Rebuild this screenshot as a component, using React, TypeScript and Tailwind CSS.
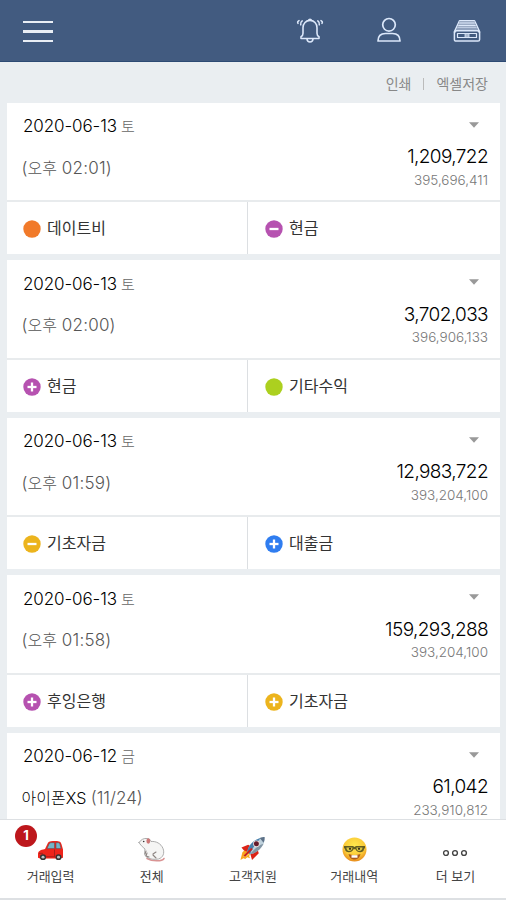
import React from "react";

type Mark = "none" | "plus" | "minus";
type Account = { name: string; color: string; mark: Mark };
type Entry = {
  date: string;
  day: string;
  memo?: string;
  memoNote: React.ReactNode;
  amount: string;
  balance: string;
  left?: Account;
  right?: Account;
};

const PURPLE = "#b652b0";
const YELLOW = "#ecb41d";

function Time({ value }: { value: string }) {
  return (
    <>
      <span>(</span>
      <span className="text-[16px] tracking-normal">오후</span>
      <span className="tracking-[0.2px]"> {value})</span>
    </>
  );
}

const entries: Entry[] = [
  {
    date: "2020-06-13", day: "토", memoNote: <Time value="02:01" />, amount: "1,209,722", balance: "395,696,411",
    left: { name: "데이트비", color: "#f17a2a", mark: "none" },
    right: { name: "현금", color: PURPLE, mark: "minus" },
  },
  {
    date: "2020-06-13", day: "토", memoNote: <Time value="02:00" />, amount: "3,702,033", balance: "396,906,133",
    left: { name: "현금", color: PURPLE, mark: "plus" },
    right: { name: "기타수익", color: "#acd01f", mark: "none" },
  },
  {
    date: "2020-06-13", day: "토", memoNote: <Time value="01:59" />, amount: "12,983,722", balance: "393,204,100",
    left: { name: "기초자금", color: YELLOW, mark: "minus" },
    right: { name: "대출금", color: "#2f7df0", mark: "plus" },
  },
  {
    date: "2020-06-13", day: "토", memoNote: <Time value="01:58" />, amount: "159,293,288", balance: "393,204,100",
    left: { name: "후잉은행", color: PURPLE, mark: "plus" },
    right: { name: "기초자금", color: YELLOW, mark: "plus" },
  },
  { date: "2020-06-12", day: "금", memo: "아이폰XS", memoNote: "(11/24)", amount: "61,042", balance: "233,910,812" },
];

function AccountCell({ account }: { account: Account }) {
  return (
    <div className="flex h-full flex-1 items-center gap-[6px]">
      <svg className="mt-[2px] h-[18px] w-[18px] shrink-0" viewBox="0 0 18 18">
        <circle cx="9" cy="9" r="8.7" fill={account.color} />
        {account.mark !== "none" && <path d="M4.5 9h9" stroke="#fff" strokeWidth="2.3" />}
        {account.mark === "plus" && <path d="M9 4.5v9" stroke="#fff" strokeWidth="2.3" />}
      </svg>
      <span className="text-[16px] leading-6 text-[#333]">{account.name}</span>
    </div>
  );
}

function Card({ entry }: { entry: Entry }) {
  return (
    <article className="h-[151.5px] shrink-0 bg-white">
      <div className="flex h-[99.5px] justify-between border-b-2 border-[#e8ebed] pl-4 pr-3">
        <div>
          <div className="mt-[11.5px] h-6 whitespace-pre text-[17px] font-light leading-6 tracking-[-0.1px] text-black">
            {entry.date}
            <span className="text-[15px] text-[#666]"> {entry.day}</span>
          </div>
          <div className="-ml-[1.5px] mt-[17.5px] h-6 whitespace-pre text-[17px] font-light leading-6 text-[#555]">
            {entry.memo && <span className="text-[16px] text-black">{entry.memo} </span>}
            {entry.memoNote}
          </div>
        </div>
        <div className="flex flex-col items-end">
          <svg className="mr-[9px] mt-[19px] h-[6px] w-[10px]" viewBox="0 0 10 6">
            <path d="M0 .3h10L5 5.7z" fill="#999" />
          </svg>
          <div className="mt-[17.5px] h-6 text-[19px] font-light leading-6 tracking-[-0.6px] text-black">{entry.amount}</div>
          <div className="mt-[0.5px] h-5 text-[13.5px] font-light leading-5 text-[#777]">{entry.balance}</div>
        </div>
      </div>
      {entry.left && entry.right && (
        <div className="flex h-[52px]">
          <div className="w-[241px] border-r border-[#dcdfe2] pl-[16px]">
            <AccountCell account={entry.left} />
          </div>
          <div className="flex-1 pl-[17px]">
            <AccountCell account={entry.right} />
          </div>
        </div>
      )}
    </article>
  );
}

function BellIcon() {
  return (
    <svg className="h-[28px] w-[28px]" viewBox="0 0 28 28" fill="none" stroke="#dce8fa" strokeWidth="1.6" strokeLinecap="round" strokeLinejoin="round">
      <path d="M12.500 3.400a1.600 1.600 0 0 1 3 0M5 21.500h18v-1.700c-1.500-.8-2-1.800-2-3.500v-5.600c0-4.300-3-7.300-7-7.300s-7 3-7 7.300v5.600c0 1.700-.5 2.700-2 3.500z" />
      <path d="M11 22c.2 2 1.300 3 3 3s2.800-1 3-3" />
      <path d="M4.700 7.700c-.4-1.500.3-2.900 1.500-3.800M2 6.400c-.7-1.100-.3-2.100 1-2.800M23.300 7.700c.4-1.500-.3-2.900-1.500-3.800M26 6.400c.7-1.100.3-2.100-1-2.800" />
    </svg>
  );
}

function PersonIcon() {
  return (
    <svg className="h-[26px] w-[24px]" viewBox="0 0 24 26" fill="none" stroke="#dce8fa" strokeWidth="1.700">
      <circle cx="12" cy="7.800" r="6.300" />
      <path d="M1 24c0-5.200 3.300-7.500 7.500-7.500h7c4.200 0 7.500 2.300 7.500 7.500z" strokeLinejoin="round" />
    </svg>
  );
}

function DriveIcon() {
  return (
    <svg className="h-[24px] w-[28px]" viewBox="0 0 28 24" fill="none" stroke="#dce8fa" strokeWidth="1.500" strokeLinejoin="round">
      <path d="M6.500 1.800h15l1.500 3 3.600 8v7.700c0 1-.6 1.600-1.600 1.600H3c-1 0-1.600-.6-1.600-1.600v-7.700L5 5z" />
      <path d="M6.500 2h15l2 7h-19z" fill="#9babc4" stroke="none" />
      <path d="M6.300 4h15.400M5.300 6.500h17.400M4 9h20" strokeWidth="1.100" />
      <path d="M1.500 13.500c.4-1.400 1.200-2 2.500-2h20c1.300 0 2.100.6 2.500 2" strokeWidth="2" />
      <path d="M4.500 14.500h19v4h-19z" strokeWidth="1.200" />
      <path d="M12 14.500h4v4h-4z" fill="#aab9d0" strokeWidth=".8" />
    </svg>
  );
}

function CarIcon() {
  return (
    <svg className="h-[21px] w-[27px]" viewBox="0 0 27 22" preserveAspectRatio="none">
      <path d="M1 15c0-3 2-4.500 7-5.500L11 3c.5-1 1.500-1.500 3-1.700 3-.4 6-.3 8 .2 1.300.3 2 1 2.500 3L26 10v8.500l-3 1H3l-2-1z" fill="#ee241b" />
      <path d="M10 9l2.200-5c.4-.8 1-1.200 2-1.200h3.300V9zM19 2.800h2c1 0 1.600.4 1.900 1.500L24 9h-5z" fill="#73b6c8" stroke="#684b50" strokeWidth=".6" />
      <path d="M2 14h4M17.500 10v8M8 17.500h10" stroke="#a9201c" />
      <circle cx="6" cy="18" r="3" fill="#333" /><circle cx="6" cy="18" r="1.500" fill="#b7c2c5" />
      <circle cx="21.500" cy="18" r="3" fill="#333" /><circle cx="21.500" cy="18" r="1.500" fill="#b7c2c5" />
    </svg>
  );
}

function MouseIcon() {
  return (
    <svg className="h-[25px] w-[27px]" viewBox="0 0 27 25" fill="none" strokeLinecap="round" strokeLinejoin="round">
      <path d="M9 21.500c5 3 15 3.300 17 0" stroke="#d99494" strokeWidth="1.500" />
      <path d="M1 5.500C3 2.500 6 1 9 1.500c2 0 3.500 1 4 3 5-.5 10 2 12 7 1.800 4.500.2 9-4.500 10.500-4 .8-9 .3-12-2-2.500-2-2-5-1.500-8C4.500 10 2 7.500 1 5.500z" fill="#f5f5f4" stroke="#a4a4a4" strokeWidth=".9" />
      <ellipse cx="10.300" cy="4" rx="1.900" ry="2.700" fill="#cd7777" />
      <circle cx="5.700" cy="4.500" r=".8" fill="#333" />
      <path d="M8 14l-1 3M9 16l-1 3 3 1M15 17l3-2M15 18l3 3" stroke="#8c8481" strokeWidth="1.100" />
    </svg>
  );
}

function RocketIcon() {
  return (
    <svg className="h-[26px] w-[28px]" viewBox="0 0 28 27">
      <path d="M2 12l7-3 5 3-7 6zM13 25l7-7-2-6-7 6z" fill="#dc2418" />
      <path d="M1 25l2-8 2-2 2 1 3-1 1 3-1 3 1 2-3-1-2 2-2-1z" fill="#f9a51d" />
      <path d="M4 21l4-4 2 2-4 3z" fill="#fff06b" />
      <path d="M8 16C10 8 17 2 26 1c1 8-6 16-15 18z" fill="#bfd1dc" />
      <path d="M8 16C10 8 17 3 22 2 18 7 13 12 11 19z" fill="#477fac" />
      <path d="M11 19C17 18 22 14 25 8l-3 1c-5 3-8 6-11 10z" fill="#8295a4" />
      <path d="M21 2c2-.8 4-1 5-1 .2 2-.2 4-1 6z" fill="#5d7187" />
      <circle cx="17.500" cy="8" r="3.400" fill="#f0dfdc" /><circle cx="17.500" cy="8" r="2.600" fill="#641a2b" />
      <path d="M5 21l8-8" stroke="#c92320" strokeWidth="2" />
    </svg>
  );
}

function NerdIcon() {
  return (
    <svg className="h-[25px] w-[25px]" viewBox="0 0 25 25">
      <defs>
        <radialGradient id="nerdFace" cx="50%" cy="35%" r="65%">
          <stop offset="0" stopColor="#ffe94e" /><stop offset=".65" stopColor="#fbcb38" /><stop offset="1" stopColor="#e88b1c" />
        </radialGradient>
      </defs>
      <circle cx="12.500" cy="12.500" r="12" fill="url(#nerdFace)" />
      <path d="M2 9h9l1.500 1L14 9h9v2l-1 1c0 4-7 4.500-8.500.2h-2C10 16.500 3 16 3 12l-1-1z" fill="#645d20" />
      <path d="M4.500 10.500h6c0 4-5 5-6 1zM14.500 10.500h6c0 4-5 5-6 1z" fill="#d8c642" />
      <circle cx="8" cy="11.800" r="1.100" fill="#302b1d" /><circle cx="17" cy="11.800" r="1.100" fill="#302b1d" />
      <path d="M6.500 17c3.500 1.500 8.500 1.500 12 0-1 4.500-4 5.500-6 5.500s-5-1-6-5.500z" fill="#ad5b18" />
      <path d="M9.500 18.200h6v2.500h-6z" fill="#fff" />
    </svg>
  );
}

function MoreIcon() {
  return (
    <svg className="h-[8px] w-[26px]" viewBox="0 0 26 8" fill="none" stroke="#444" strokeWidth="1.400">
      <circle cx="4" cy="4" r="2.400" /><circle cx="13" cy="4" r="2.400" /><circle cx="22" cy="4" r="2.400" />
    </svg>
  );
}

const tabs = [
  { label: "거래입력", icon: <CarIcon />, badge: "1" },
  { label: "전체", icon: <MouseIcon /> },
  { label: "고객지원", icon: <RocketIcon /> },
  { label: "거래내역", icon: <NerdIcon /> },
  { label: "더 보기", icon: <MoreIcon /> },
];

export default function App() {
  return (
    <div className="flex h-[900px] w-[506px] flex-col overflow-hidden bg-[#eaeef1] font-['Inter','Noto_Sans_CJK_KR',sans-serif]">
      <header className="flex h-[62px] shrink-0 items-center border-b border-[#2d4a73] bg-[#425b80] pl-[23px] pr-[25px]">
        <div className="mt-[2px] flex w-[30px] flex-col gap-[7px]">
          <span className="h-[2.500px] bg-[#e9eef5]" />
          <span className="h-[2.500px] bg-[#e9eef5]" />
          <span className="h-[2.500px] bg-[#e9eef5]" />
        </div>
        <div className="ml-auto flex items-center">
          <BellIcon />
          <span className="ml-[53px] mt-[-2px]"><PersonIcon /></span>
          <span className="ml-[52px]"><DriveIcon /></span>
        </div>
      </header>
      <div className="flex h-[40.500px] shrink-0 items-center justify-end pr-[18px] pt-[3px] text-[14px] text-[#888]">
        <span>인쇄</span>
        <span className="mx-[12px] h-3 w-px bg-[#bbb]" />
        <span>엑셀저장</span>
      </div>
      <main className="flex min-h-0 flex-1 flex-col gap-[6px] overflow-hidden pl-[7px] pr-[6px]">
        {entries.map((entry, i) => <Card key={i} entry={entry} />)}
      </main>
      <nav className="flex h-[81px] shrink-0 border-b-2 border-t border-[#dde0e3] bg-white">
        {tabs.map((tab) => (
          <div key={tab.label} className="relative flex flex-1 flex-col items-center">
            <div className="mt-[12px] flex h-[34px] items-center justify-center">
              <span className={tab.label === "더 보기" ? "flex pt-[8px]" : tab.badge ? "flex pt-[2px]" : "flex"}>{tab.icon}</span>
            </div>
            <span className="text-[13px] leading-5 text-[#444]">{tab.label}</span>
            {tab.badge && (
              <span className="absolute left-[15px] top-[5px] flex h-[22px] w-[22px] items-center justify-center rounded-full bg-[#bd171c] text-[13px] font-bold text-white">
                {tab.badge}
              </span>
            )}
          </div>
        ))}
      </nav>
    </div>
  );
}
